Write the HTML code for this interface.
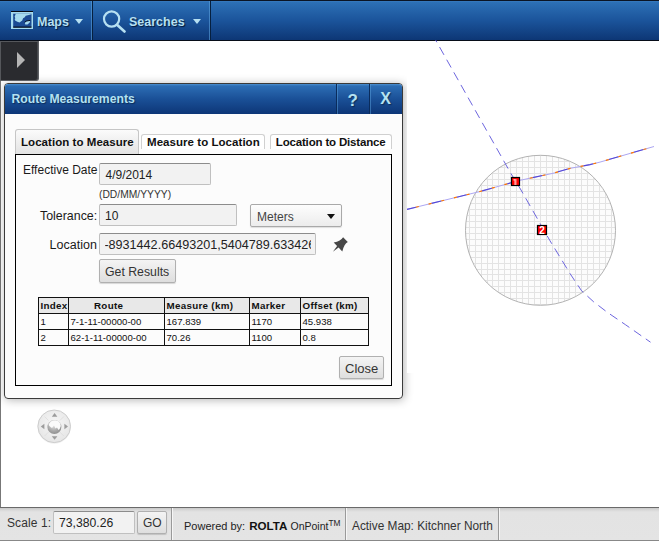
<!DOCTYPE html>
<html><head><meta charset="utf-8">
<style>
html,body{margin:0;padding:0;}
body{width:659px;height:542px;overflow:hidden;position:relative;background:#fff;font-family:"Liberation Sans",sans-serif;}
.abs{position:absolute;}
#top{left:0;top:0;width:659px;height:41px;background:linear-gradient(#4a8dcd 0px,#2d70b6 2px,#1b549b 50%,#0c3573 100%);}
#top .tl{left:0;top:0;width:659px;height:1px;background:#0b1424;}
#top .bl{left:0;top:40px;width:659px;height:1px;background:#070d18;}
.mtxt{font-weight:bold;font-size:12.5px;color:#b6e0f2;text-shadow:1px 1px 1px #061a3a;white-space:nowrap;}
.tri{width:0;height:0;border-left:4.5px solid transparent;border-right:4.5px solid transparent;border-top:5px solid #b6e0f2;}
.sep{width:1px;height:40px;background:#06203f;box-shadow:-1px 0 0 rgba(90,160,220,.6);}
#map{left:0;top:41px;width:659px;height:466px;background:#fff;overflow:hidden;}
#map .lb{left:0;top:0;width:1px;height:466px;background:#777;}
#mapbot{left:0;top:507px;width:659px;height:1px;background:#6a6a6a;}
#status{left:0;top:508px;width:659px;height:33px;background:linear-gradient(#c9c9c9 0px,#d8d8d8 2px,#e3e3e3 4px,#e4e4e4 100%);}
#status .bb{left:0;top:32px;width:659px;height:1px;background:#888;}
#toggle{left:0;top:41px;width:38.5px;height:40px;background:#2a2b2f;border-right:1px solid #5d5f63;border-bottom:1px solid #5d5f63;border-bottom-right-radius:3px;box-sizing:border-box;box-shadow:inset 1px 1px 0 #55575b, inset -1px 0 0 #45474b;}
#dlg{left:4px;top:83px;width:399px;height:316px;background:#fcfcfc;border:1px solid #3a3a3a;border-radius:4px;box-sizing:border-box;}
#dhead{left:0;top:0;width:397px;height:30px;background:linear-gradient(#4a8fd0 0px,#2c6db4 2px,#1a5097 50%,#0d3677 100%);border-radius:3px 3px 0 0;}
.htxt{font-weight:bold;font-size:12px;color:#b4e2f2;text-shadow:1px 1px 1px rgba(6,26,58,.6);white-space:nowrap;}
.lbl{font-size:12px;color:#1a1a1a;white-space:nowrap;}
.inp{background:#f2f2f2;border:1px solid #c0c0c0;border-top-color:#8c8c8c;border-radius:2px;box-sizing:border-box;font-size:12px;color:#222;white-space:nowrap;overflow:hidden;}
.btn{background:linear-gradient(#f4f4f4,#dedede);border:1px solid #b0b0b0;border-radius:2px;box-sizing:border-box;font-size:12px;color:#333;white-space:nowrap;box-shadow:0 1px 1px rgba(0,0,0,.15);}
table.res{border-collapse:collapse;position:absolute;}
table.res td,table.res th{border:1px solid #111;padding:0 1px 0 1.5px;height:15px;font-size:9.6px;color:#111;text-align:left;white-space:nowrap;}
table.res th{background:#e8e8e8;font-size:9.8px;letter-spacing:0.3px;font-weight:bold;}

.tab{box-sizing:border-box;border:1px solid #d0d0d0;border-bottom:none;border-radius:3px 3px 0 0;background:#fff;}
.tab span{font-size:11.5px;font-weight:bold;color:#111;white-space:nowrap;}
.tab.sel{border-color:#c6c6c6;background:linear-gradient(#fbfbfb,#e3e3e3);}
.sel2{box-sizing:border-box;border:1px solid #a9a9a9;border-radius:2px;background:linear-gradient(#fdfdfd,#ececec);font-size:12px;color:#444;box-shadow:0 1px 1px rgba(0,0,0,.12);}
</style></head>
<body>
<!-- top bar -->
<div id="top" class="abs">
  <div class="abs tl"></div>
  <div class="abs bl"></div>
  <svg class="abs" style="left:11px;top:11px" width="23" height="19" viewBox="0 0 23 19">
    <rect x="0" y="0" width="22" height="1" fill="#050a14"/>
    <rect x="0" y="1" width="22" height="17" fill="#a6dbee"/>
    <rect x="2.2" y="2.7" width="18.3" height="13.6" fill="#1b4b93"/>
    <rect x="2.2" y="15.6" width="18.3" height="1.1" fill="#02060e"/>
    <path d="M4.75 2.7 L20.5 2.7 L20.5 3.2 L17.8 4.1 L14.7 4.75 L13.8 6.3 L12.1 7.2 L11.2 9.4 L8.5 11.4 L6.3 10.7 L4.1 9.4 L3.65 8.1 L4.3 7.4 L3.65 5.6 L4.3 4.1 Z" fill="#a6dbee"/>
    <path d="M13.8 12.1 L14.7 10.7 L16.9 9.85 L19.15 9.85 L18.7 11.6 L16.5 13.4 L14.3 13.4 Z" fill="#a6dbee"/>
    <path d="M13.6 11.2 L15.5 10 L19.3 9.4" stroke="#02060e" stroke-width="0.9" fill="none"/>
  </svg>
  <div class="abs mtxt" style="left:37px;top:14.6px">Maps</div>
  <div class="abs tri" style="left:74.8px;top:18.8px"></div>
  <div class="abs sep" style="left:92px;top:1px;height:39px"></div>
  <svg class="abs" style="left:101px;top:9px" width="26" height="24" viewBox="0 0 26 24">
    <circle cx="10.6" cy="10" r="7.6" stroke="#b6e0f2" stroke-width="2.2" fill="none"/>
    <line x1="16" y1="15.8" x2="23.5" y2="22.5" stroke="#b6e0f2" stroke-width="2.6" stroke-linecap="round"/>
  </svg>
  <div class="abs mtxt" style="left:129px;top:14.6px">Searches</div>
  <div class="abs tri" style="left:193px;top:19px"></div>
  <div class="abs sep" style="left:210px;top:1px;height:39px"></div>
</div>

<!-- map -->
<div id="map" class="abs">
  <div class="abs lb"></div>
</div>
<div id="mapbot" class="abs"></div>
<div class="abs" style="left:4px;top:83px;width:399px;height:316px;border-radius:4px;box-shadow:1px 1px 10px rgba(0,0,0,.3);background:#fff"></div>

<svg class="abs" style="left:0;top:0" width="659" height="542" viewBox="0 0 659 542">
  <rect x="407" y="41" width="252" height="332" fill="#fff"/>
  <defs>
    <clipPath id="cc"><circle cx="540.5" cy="230.3" r="75"/></clipPath>
    <radialGradient id="navbg" cx="50%" cy="40%" r="60%">
      <stop offset="0" stop-color="#f6f6f6"/><stop offset="1" stop-color="#e6e6e6"/>
    </radialGradient>
    <radialGradient id="ball" cx="45%" cy="35%" r="70%">
      <stop offset="0" stop-color="#e8e8e8"/><stop offset="0.6" stop-color="#a9a9a9"/><stop offset="1" stop-color="#8a8a8a"/>
    </radialGradient>
  </defs>
  <circle cx="540.5" cy="230.3" r="75" fill="#fcfcfc"/>
  <path clip-path="url(#cc)" shape-rendering="crispEdges" fill="#e3e3e3" d="M469 154h1v152h-1zM475 154h1v152h-1zM481 154h1v152h-1zM487 154h1v152h-1zM492 154h1v152h-1zM498 154h1v152h-1zM504 154h1v152h-1zM510 154h1v152h-1zM516 154h1v152h-1zM522 154h1v152h-1zM528 154h1v152h-1zM534 154h1v152h-1zM540 154h1v152h-1zM546 154h1v152h-1zM552 154h1v152h-1zM558 154h1v152h-1zM564 154h1v152h-1zM569 154h1v152h-1zM575 154h1v152h-1zM581 154h1v152h-1zM587 154h1v152h-1zM593 154h1v152h-1zM599 154h1v152h-1zM605 154h1v152h-1zM611 154h1v152h-1zM464 155h153v1h-153zM464 161h153v1h-153zM464 167h153v1h-153zM464 173h153v1h-153zM464 179h153v1h-153zM464 185h153v1h-153zM464 191h153v1h-153zM464 197h153v1h-153zM464 203h153v1h-153zM464 209h153v1h-153zM464 215h153v1h-153zM464 221h153v1h-153zM464 227h153v1h-153zM464 233h153v1h-153zM464 239h153v1h-153zM464 245h153v1h-153zM464 251h153v1h-153zM464 257h153v1h-153zM464 263h153v1h-153zM464 269h153v1h-153zM464 274h153v1h-153zM464 280h153v1h-153zM464 286h153v1h-153zM464 292h153v1h-153zM464 298h153v1h-153zM464 304h153v1h-153z"/>
  <circle cx="540.5" cy="230.3" r="75" fill="none" stroke="#b3b3b3" stroke-width="1"/>
  <polyline points="435.6,40 510,172 521,190 550,240.8 559.6,256.5 570.3,274 581.5,290.7 593.5,301.7 607.3,312.3 625.6,324.8 650.5,342.2" fill="none" stroke="#5c55da" stroke-width="0.9" stroke-dasharray="9,5.5" stroke-dashoffset="6.4"/>
  <polyline points="407,209.4 480,191.5 520,180.3 553,173.3 570,168.4 590,164.6 600,162.1 654,146.5" fill="none" stroke="#aca6f2" stroke-width="1"/>
  <polyline points="407,209.4 480,191.5 520,180.3 553,173.3 570,168.4 590,164.6 600,162.1 654,146.5" fill="none" stroke="#5549d6" stroke-width="1.1" stroke-dasharray="0,3,10.05,13.05" stroke-dashoffset="3.9"/>
  <polyline points="407,209.4 480,191.5 520,180.3 553,173.3 570,168.4 590,164.6 600,162.1 654,146.5" fill="none" stroke="#ff7800" stroke-width="1.2" stroke-dasharray="3,10.05" stroke-dashoffset="3.9"/>
  <rect x="511.5" y="177.5" width="8" height="8" fill="#ff0000" stroke="#000" stroke-width="1.2"/>
  <rect x="514.3" y="179" width="2.2" height="6" fill="#ff9a9a"/>
  <rect x="513.5" y="179" width="1.3" height="1.6" fill="#ffc0c0"/>
  <rect x="537.5" y="225.5" width="9" height="9" fill="#ff0000" stroke="#000" stroke-width="1.2"/>
  <text x="542" y="234" font-family="Liberation Sans" font-weight="bold" font-size="10" fill="#fff" text-anchor="middle">2</text>
  <!-- nav control -->
  <circle cx="54.2" cy="427" r="16.7" fill="rgba(0,0,0,0.06)"/>
  <circle cx="54.2" cy="426.3" r="16.3" fill="url(#navbg)" stroke="#cdcdcd" stroke-width="1"/>
  <g stroke="#dcdcdc" stroke-width="0.8">
    <line x1="44.5" y1="416.5" x2="48.5" y2="420.5"/><line x1="63.9" y1="416.5" x2="59.9" y2="420.5"/>
    <line x1="44.5" y1="436.1" x2="48.5" y2="432.1"/><line x1="63.9" y1="436.1" x2="59.9" y2="432.1"/>
  </g>
  <g fill="#9c9c9c">
    <path d="M54.6 413 L57.4 416.8 L51.8 416.8 Z"/>
    <path d="M54.6 439.8 L57.4 436.3 L51.8 436.3 Z"/>
    <path d="M40.8 426.5 L44.4 423.8 L44.4 429.2 Z"/>
    <path d="M68 426.5 L64.4 423.8 L64.4 429.2 Z"/>
  </g>
  <circle cx="54.4" cy="427.6" r="7.3" fill="#f0f0f0" opacity="0.5"/>
  <circle cx="54.4" cy="427.1" r="7" fill="url(#ball)"/>
  <path d="M48.5 425 Q50 420.5 55 420.3 Q60.5 421 60.8 426 Q60 429 58.5 430 L57 427.5 L55.5 428.5 L54 425.5 L52 428 L50.5 427 Z" fill="#fbfbfb"/>
</svg>


<!-- toggle -->
<div id="toggle" class="abs">
  <div class="abs" style="left:16.5px;top:10.5px;width:0;height:0;border-top:8.5px solid transparent;border-bottom:8.5px solid transparent;border-left:8.7px solid #b5b5b5;"></div>
</div>

<!-- dialog -->
<div id="dlg" class="abs">
  <div id="dhead" class="abs">
    <div class="abs htxt" style="left:6.5px;top:7.6px;font-size:12.2px">Route Measurements</div>
    <div class="abs" style="left:331px;top:0;width:1px;height:30px;background:#0a2c5c;box-shadow:1px 0 0 rgba(90,160,220,.5)"></div>
    <div class="abs" style="left:364px;top:0;width:1px;height:30px;background:#0a2c5c;box-shadow:1px 0 0 rgba(90,160,220,.5)"></div>
    <div class="abs htxt" style="left:342.5px;top:6.5px;font-size:17px">?</div>
    <div class="abs htxt" style="left:375.3px;top:5.8px;font-size:16px">X</div>
  </div>
</div>


<!-- dialog content -->
<div class="abs tab sel" style="left:15px;top:129px;width:124px;height:25px;"><span style="left:5px;top:6px;letter-spacing:0.05px" class="abs">Location to Measure</span></div>
<div class="abs tab" style="left:141px;top:134px;width:124px;height:20px;"><span style="left:5px;top:0.5px;letter-spacing:0.05px" class="abs">Measure to Location</span></div>
<div class="abs tab" style="left:270px;top:134px;width:122px;height:20px;"><span style="left:4.8px;top:0.5px;letter-spacing:-0.17px" class="abs">Location to Distance</span></div>
<div class="abs" style="left:141px;top:149px;width:251px;height:5px;background:#fcfcfc"></div>
<div class="abs" style="left:15px;top:154px;width:377px;height:232px;border:1px solid #000;box-sizing:border-box;background:#fcfcfc"></div>

<div class="abs lbl" style="left:23px;top:163px">Effective Date</div>
<div class="abs inp" style="left:99px;top:163px;width:112px;height:22px;padding:4px 0 0 5.5px">4/9/2014</div>
<div class="abs lbl" style="left:99px;top:188.8px;font-size:10.3px;color:#333">(DD/MM/YYYY)</div>

<div class="abs lbl" style="left:40px;top:208.6px;font-size:12.4px">Tolerance:</div>
<div class="abs inp" style="left:99px;top:204px;width:138px;height:22px;padding:4px 0 0 5px">10</div>
<div class="abs sel2" style="left:250px;top:204px;width:92px;height:23px;">
  <span class="abs" style="left:6px;top:5.2px">Meters</span>
  <div class="abs" style="left:76px;top:8.5px;width:0;height:0;border-left:4.7px solid transparent;border-right:4.7px solid transparent;border-top:5.2px solid #111"></div>
</div>

<div class="abs lbl" style="left:49.6px;top:237.6px;font-size:12.5px">Location</div>
<div class="abs inp" style="left:99px;top:233px;width:217px;height:22px;"><div class="abs" style="left:5px;top:0;width:205.5px;height:20px;overflow:hidden"><span class="abs" style="left:-0.6px;top:4px;font-size:12.6px">-8931442.66493201,5404789.633426</span></div></div>
<svg class="abs" style="left:328px;top:232px" width="24" height="24" viewBox="0 0 24 24">
  <path d="M15.1 5.2 L19.8 10 Q16.2 11.8 14.3 19.4 L10.6 15.4 L4.9 19.8 L9.1 14 L5.7 10.6 Q12.8 9.2 15.1 5.2 Z" fill="#474747"/>
</svg>
<div class="abs btn" style="left:99px;top:259px;width:77px;height:24px;padding:5px 0 0 5px;font-size:12.3px">Get Results</div>

<table class="res" style="left:38px;top:297px;width:331px;table-layout:fixed">
<colgroup><col style="width:30px"><col style="width:96px"><col style="width:85px"><col style="width:51px"><col style="width:68px"></colgroup>
<tr><th>Index</th><th style="padding-left:25px">Route</th><th>Measure (km)</th><th>Marker</th><th>Offset (km)</th></tr>
<tr><td>1</td><td>7-1-11-00000-00</td><td>167.839</td><td>1170</td><td>45.938</td></tr>
<tr><td>2</td><td>62-1-11-00000-00</td><td>70.26</td><td>1100</td><td>0.8</td></tr>
</table>

<div class="abs btn" style="left:339px;top:356px;width:45px;height:23px;padding:4.2px 0 0 5px;font-size:13px">Close</div>

<!-- status -->
<div id="status" class="abs">
  <div class="abs bb"></div>

  <div class="abs" style="left:171px;top:0;width:1px;height:32px;background:#9a9a9a;box-shadow:1px 0 0 #f6f6f6"></div>
  <div class="abs" style="left:184px;top:11px;font-size:11px;color:#222;white-space:nowrap">Powered by: <b style="font-size:11.6px;color:#111;margin-left:1px">ROLTA</b> <span style="font-size:10.5px">OnPoint</span><sup style="font-size:8.3px;vertical-align:0;position:relative;top:-4px">TM</sup></div>
  <div class="abs" style="left:345px;top:0;width:1px;height:32px;background:#9a9a9a;box-shadow:1px 0 0 #f6f6f6"></div>
  <div class="abs lbl" style="left:352px;top:10.8px;color:#333;font-size:11.85px">Active Map: Kitchner North</div>
  <div class="abs" style="left:498px;top:0;width:1px;height:32px;background:#9a9a9a;box-shadow:1px 0 0 #f6f6f6"></div>
  <div class="abs lbl" style="left:7px;top:8px;color:#333;letter-spacing:0.1px">Scale 1:</div>
  <div class="abs inp" style="left:53px;top:3px;width:82px;height:23px;padding:4px 0 0 5px;font-size:12.2px">73,380.26</div>
  <div class="abs btn" style="left:137px;top:3px;width:30px;height:23px;padding:4px 0 0 5px;">GO</div>
</div>
</body></html>
